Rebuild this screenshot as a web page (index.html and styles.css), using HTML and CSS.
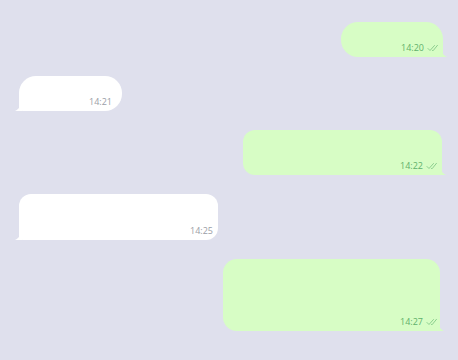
FILE: index.html
```html
<!DOCTYPE html>
<html>
<head>
<meta charset="utf-8">
<link rel="stylesheet" href="styles.css">
</head>
<body>
<div class="chat">
  <div class="bubble out b1">
    <span class="meta">14:20 <svg class="checks" width="13" height="8" viewBox="0 0 13 8"><path d="M1 4.5l2 2 4.5-5M5.5 6.5l.5.3 4.5-5.5" fill="none" stroke="currentColor" stroke-width="1" stroke-linecap="round"/></svg></span>
    <svg class="tail tail-out" width="8" height="10" viewBox="0 0 8 10"><path d="M0 0v10h7c-2.5-1-5-3.5-5.5-7z" fill="#d7fdc5"/></svg>
  </div>
  <div class="bubble in b2">
    <span class="meta">14:21</span>
    <svg class="tail tail-in" width="8" height="10" viewBox="0 0 8 10"><path d="M8 0v10H1c2.5-1 5-3.5 5.5-7z" fill="#fff"/></svg>
  </div>
  <div class="bubble out b3">
    <span class="meta">14:22 <svg class="checks" width="13" height="8" viewBox="0 0 13 8"><path d="M1 4.5l2 2 4.5-5M5.5 6.5l.5.3 4.5-5.5" fill="none" stroke="currentColor" stroke-width="1" stroke-linecap="round"/></svg></span>
    <svg class="tail tail-out" width="8" height="10" viewBox="0 0 8 10"><path d="M0 0v10h7c-2.5-1-5-3.5-5.5-7z" fill="#d7fdc5"/></svg>
  </div>
  <div class="bubble in b4">
    <span class="meta">14:25</span>
    <svg class="tail tail-in" width="8" height="10" viewBox="0 0 8 10"><path d="M8 0v10H1c2.5-1 5-3.5 5.5-7z" fill="#fff"/></svg>
  </div>
  <div class="bubble out b5">
    <span class="meta">14:27 <svg class="checks" width="13" height="8" viewBox="0 0 13 8"><path d="M1 4.5l2 2 4.5-5M5.5 6.5l.5.3 4.5-5.5" fill="none" stroke="currentColor" stroke-width="1" stroke-linecap="round"/></svg></span>
    <svg class="tail tail-out" width="8" height="10" viewBox="0 0 8 10"><path d="M0 0v10h7c-2.5-1-5-3.5-5.5-7z" fill="#d7fdc5"/></svg>
  </div>
</div>
</body>
</html>
```
FILE: styles.css
```css
html, body {
  margin: 0;
  padding: 0;
  background: #dfe0ed;
  font-family: "Open Sans", "Liberation Sans", sans-serif;
}
.chat {
  display: flex;
  flex-direction: column;
  gap: 19px;
  padding: 22px 15px 0 19px;
  height: 360px;
  box-sizing: border-box;
}
.bubble {
  position: relative;
  box-sizing: border-box;
  display: flex;
  align-items: flex-end;
  justify-content: flex-end;
  padding: 0 14px 4px 0;
}
.out {
  align-self: flex-end;
  background: #d7fdc5;
}
.in {
  align-self: flex-start;
  background: #ffffff;
  padding-right: 10px;
}
.b1 { width: 102px; height: 35px; border-radius: 17px 17px 4px 17px; padding-right: 3px; }
.b2 { width: 103px; height: 35px; border-radius: 17px 17px 17px 4px; }
.b3 { width: 199px; height: 45px; border-radius: 12px 12px 4px 12px; margin-right: 1px; padding-right: 3px; }
.b4 { width: 199px; height: 46px; border-radius: 12px 12px 12px 4px; padding-right: 5px; }
.b5 { width: 217px; height: 72px; border-radius: 14px 14px 4px 14px; margin-right: 3px; padding-right: 1px; }
.meta {
  font-size: 9px;
  line-height: 10px;
  display: flex;
  align-items: center;
  gap: 3px;
}
.out .meta { color: #5fb16b; }
.in .meta { color: #9a9ea6; }
.checks { color: #8ccf8f; }
.tail {
  position: absolute;
  bottom: 0;
}
.tail-out { right: -5px; }
.tail-in { left: -5px; }
```
